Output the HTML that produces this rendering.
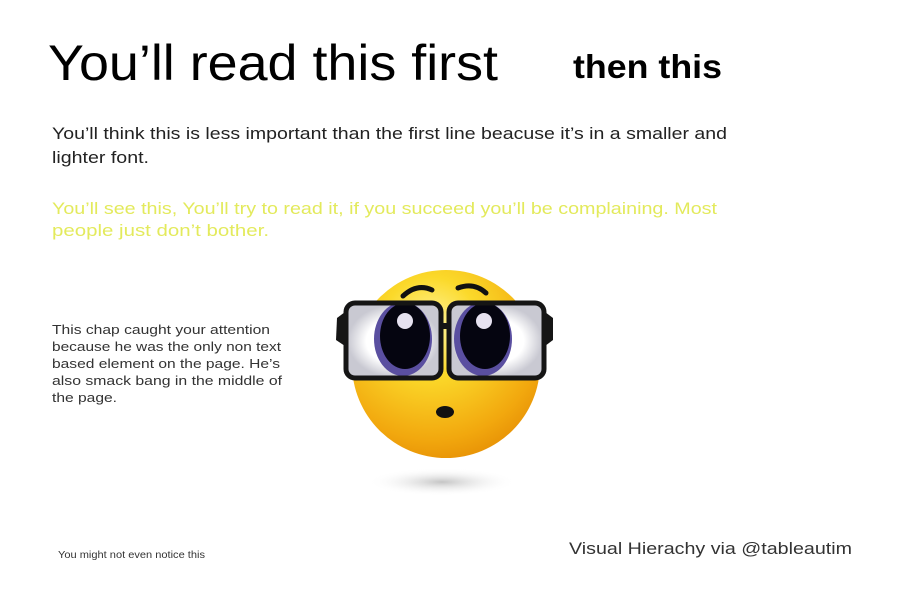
<!DOCTYPE html>
<html><head><meta charset="utf-8"><style>
html,body{margin:0;padding:0;background:#fff;width:900px;height:600px;overflow:hidden}
svg{display:block}
text{font-family:"Liberation Sans",sans-serif}
</style></head><body>
<svg width="900" height="600" viewBox="0 0 900 600" xmlns="http://www.w3.org/2000/svg">
<defs>
<radialGradient id="face" cx="0.42" cy="0.3" r="0.75">
<stop offset="0" stop-color="#fff6a0"/><stop offset="0.35" stop-color="#fbd92a"/><stop offset="0.8" stop-color="#f2a80e"/><stop offset="1" stop-color="#e68f05"/>
</radialGradient>
<radialGradient id="sh" cx="0.5" cy="0.5" r="0.5">
<stop offset="0" stop-color="#c4c4c4"/><stop offset="1" stop-color="#fff" stop-opacity="0"/>
</radialGradient>
<radialGradient id="eye" cx="0.5" cy="0.5" r="0.5">
<stop offset="0.6" stop-color="#fff"/><stop offset="1" stop-color="#c9c9d2"/>
</radialGradient>
</defs>
<text x="48" y="80" font-size="50" textLength="450" lengthAdjust="spacingAndGlyphs">You’ll read this first</text>
<text x="573" y="78" font-size="33" font-weight="bold" textLength="149" lengthAdjust="spacingAndGlyphs">then this</text>
<text x="52" y="139" font-size="17" fill="#222" textLength="675" lengthAdjust="spacingAndGlyphs">You’ll think this is less important than the first line beacuse it’s in a smaller and</text>
<text x="52" y="163" font-size="17" fill="#222" textLength="97" lengthAdjust="spacingAndGlyphs">lighter font.</text>
<text x="52" y="214" font-size="17" fill="#e3ea5c" textLength="665" lengthAdjust="spacingAndGlyphs">You’ll see this, You’ll try to read it, if you succeed you’ll be complaining. Most</text>
<text x="52" y="236" font-size="17" fill="#e3ea5c" textLength="217" lengthAdjust="spacingAndGlyphs">people just don’t bother.</text>
<g font-size="13" fill="#333">
<text x="52" y="334" textLength="218" lengthAdjust="spacingAndGlyphs">This chap caught your attention</text>
<text x="52" y="351" textLength="229" lengthAdjust="spacingAndGlyphs">because he was the only non text</text>
<text x="52" y="368" textLength="228" lengthAdjust="spacingAndGlyphs">based element on the page. He’s</text>
<text x="52" y="385" textLength="230" lengthAdjust="spacingAndGlyphs">also smack bang in the middle of</text>
<text x="52" y="402" textLength="65" lengthAdjust="spacingAndGlyphs">the page.</text>
</g>
<text x="58" y="558" font-size="10" fill="#333" textLength="147" lengthAdjust="spacingAndGlyphs">You might not even notice this</text>
<text x="569" y="554" font-size="17" fill="#333" textLength="283" lengthAdjust="spacingAndGlyphs">Visual Hierachy via @tableautim</text>
<ellipse cx="442" cy="482" rx="75" ry="14" fill="url(#sh)"/>
<circle cx="446" cy="364" r="94" fill="url(#face)"/>
<path d="M403 296 Q417 283 432 290" stroke="#111" stroke-width="5" fill="none" stroke-linecap="round"/>
<path d="M458 288 Q474 282 486 293" stroke="#111" stroke-width="5" fill="none" stroke-linecap="round"/>
<rect x="348" y="305" width="91" height="72" rx="8" fill="url(#eye)"/>
<rect x="451" y="305" width="91" height="72" rx="8" fill="url(#eye)"/>
<ellipse cx="403" cy="339" rx="29" ry="37" fill="#5a4fa0"/>
<ellipse cx="405" cy="336" rx="25" ry="33" fill="#050510"/>
<ellipse cx="483" cy="339" rx="29" ry="37" fill="#5a4fa0"/>
<ellipse cx="485" cy="336" rx="25" ry="33" fill="#050510"/>
<circle cx="405" cy="321" r="8" fill="#e6e2f0"/>
<circle cx="484" cy="321" r="8" fill="#e6e2f0"/>
<rect x="346" y="303" width="95" height="75" rx="9" fill="none" stroke="#151515" stroke-width="5"/>
<rect x="449" y="303" width="95" height="75" rx="9" fill="none" stroke="#151515" stroke-width="5"/>
<rect x="441" y="323" width="8" height="6" fill="#151515"/>
<path d="M345 312 L337 318 L336 340 L345 346 Z" fill="#151515"/>
<path d="M545 312 L553 318 L553 340 L545 346 Z" fill="#151515"/>
<ellipse cx="445" cy="412" rx="9" ry="6" fill="#111"/>
</svg>
</body></html>
